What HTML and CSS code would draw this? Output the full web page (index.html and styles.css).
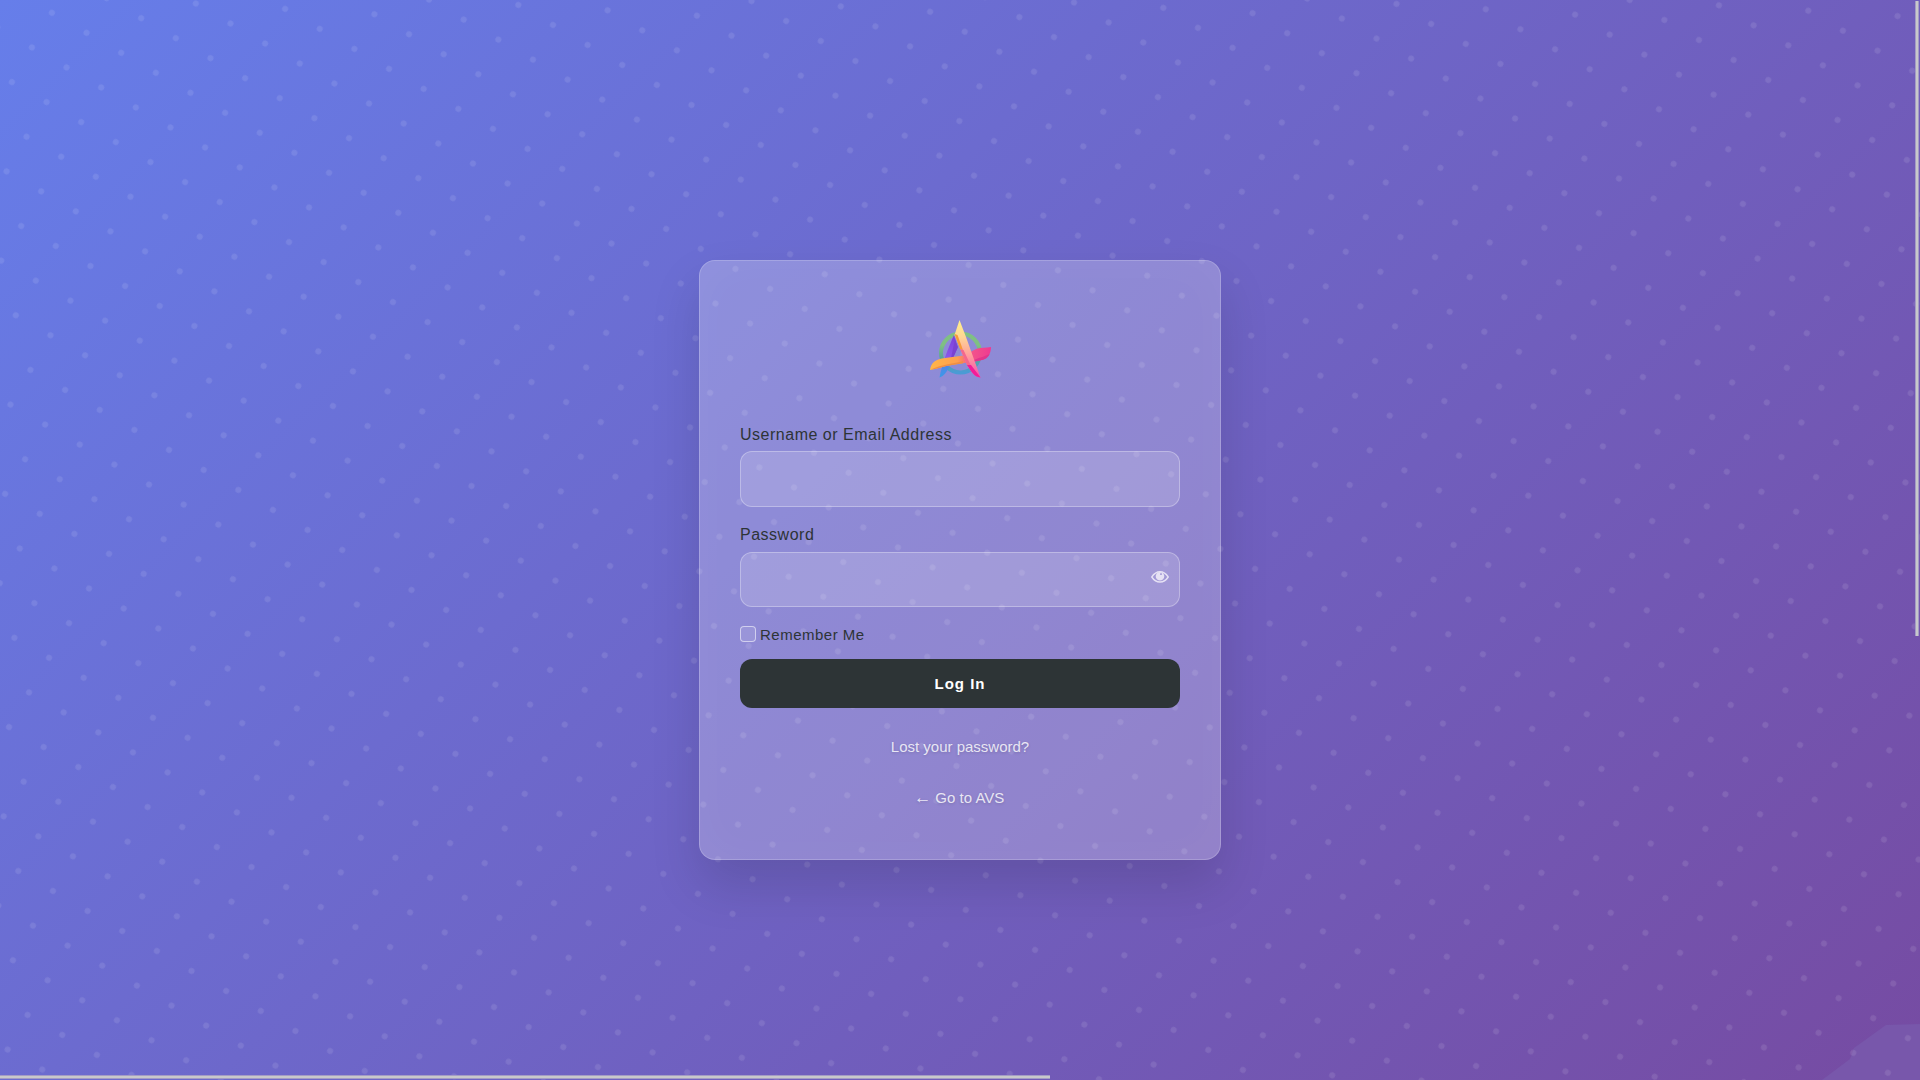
FILE: index.html
```html
<!DOCTYPE html>
<html lang="en">
<head>
<meta charset="utf-8">
<title>Log In</title>
<link rel="stylesheet" href="styles.css">
</head>
<body>
<svg class="dots" aria-hidden="true">
  <defs>
    <pattern id="dot" width="40" height="40" patternUnits="userSpaceOnUse" patternTransform="translate(51.9 12.8) rotate(30) translate(-20 -20)">
      <circle cx="20" cy="20" r="3" fill="#fff" fill-opacity=".1"/>
    </pattern>
  </defs>
  <polygon class="corner" points="1822,1080 1850,1059 1854,1048 1886,1025 1920,1024 1920,1080"/>
  <rect width="1920" height="1080" fill="url(#dot)"/>
</svg>
<main class="card">
  <svg class="logo" viewBox="0 0 72 70" aria-label="AVS">
    <defs>
      <linearGradient id="ring" x1="0" y1="0" x2="0" y2="1"><stop offset=".3" stop-color="#7fc083"/><stop offset=".62" stop-color="#5aa596"/><stop offset="1" stop-color="#4a9bd5"/></linearGradient>
      <linearGradient id="left" x1="0" y1="0" x2="0" y2="1"><stop offset="0" stop-color="#7b3fd8"/><stop offset=".5" stop-color="#8a55ea"/><stop offset=".75" stop-color="#4f88e8"/><stop offset="1" stop-color="#3a9ae8"/></linearGradient>
      <linearGradient id="bar" x1="0" y1="0" x2="1" y2="0"><stop offset="0" stop-color="#ffb648"/><stop offset=".45" stop-color="#ff9f50"/><stop offset=".65" stop-color="#f3568a"/><stop offset="1" stop-color="#ee3a91"/></linearGradient>
      <linearGradient id="right" x1="0" y1="0" x2="0" y2="1"><stop offset="0" stop-color="#fff08c"/><stop offset=".3" stop-color="#ffd594"/><stop offset=".6" stop-color="#ffa09c"/><stop offset="1" stop-color="#f84fae"/></linearGradient>
    </defs>
    <circle cx="36.500" cy="39" r="19.500" fill="none" stroke="url(#ring)" stroke-width="4"/>
    <path fill="url(#left)" d="M30 21 C25 32 18 50 15.500 63.500 C20 62 23 58 25 53 L33.500 34 Z"/>
    <path fill="#7a42d2" d="M31 25 L34 33 L29.500 43 L27 44 Z"/>
    <path fill="url(#bar)" d="M6 56 C7 48 12 45 21 44 L40 41.500 L52 35 C57 33 62 34 67 33 C67 41 63 45 56 46.500 L28 51 C20 52 13 55 6 56 Z"/>
    <path fill="#f08f45" d="M7 55.500 C18 50 30 50 39 47 L39 49.300 L28 51 C20 52 13 55 7 55.500 Z"/>
    <path fill="#e0358c" d="M50 46 C57 43 62 42 65.500 40 C64 44 61 45.500 56 46.500 L49 48 Z"/>
    <path fill="url(#right)" d="M35.500 6 L42 23 L56.500 63.500 C50 63 47 57 43 51 L30.500 21 Z"/>
    <path fill="#f79a3a" d="M30.500 20 L33.500 21 L39 36 L36 35 Z"/>
    <path fill="#f4688c" d="M36 35 L39.500 36 L48 54 L43 51 Z"/>
    <path fill="#f21c99" d="M43 51 L47 51 L56.500 63.500 C50 63 47 57 43 51 Z"/>
  </svg>
  <form class="form">
    <label class="label" for="user">Username or Email Address</label>
    <input class="field" id="user" type="text">
    <label class="label" for="pass">Password</label>
    <div class="password">
      <input class="field" id="pass" type="password">
      <svg class="eye" viewBox="0 0 18 12" aria-hidden="true">
        <path fill="none" stroke="currentColor" stroke-width="1.400" d="M.8 6 C3.500 1.800 6 .8 9 .8 S14.500 1.800 17.200 6 C14.500 10.200 12 11 9 11 S3.500 10.200 .8 6 Z"/>
        <path fill="currentColor" fill-rule="evenodd" d="M9 1 A4.200 4.200 0 1 0 9 9.600 A4.200 4.200 0 1 0 9 1 Z M9.200 2.300 H10.800 V3.900 H9.200 Z"/>
      </svg>
    </div>
    <div class="remember"><input class="check" id="remember" type="checkbox"><label for="remember">Remember Me</label></div>
    <button class="submit" type="button">Log In</button>
  </form>
  <a class="link">Lost your password?</a>
  <a class="link back"><span class="arrow">←</span> Go to AVS</a>
</main>
<div class="bar-v"></div>
<div class="bar-h"></div>
</body>
</html>
```
FILE: styles.css
```css
* { box-sizing: border-box; }
body {
  margin: 0;
  height: 1080px;
  overflow: hidden;
  position: relative;
  display: flex;
  justify-content: center;
  align-items: flex-start;
  padding-top: 260px;
  font-family: "Liberation Sans", Arial, sans-serif;
  background: linear-gradient(135deg, #667eea 0%, #764ba2 100%);
}
.dots { position: absolute; inset: 0; width: 100%; height: 100%; }
.corner { fill: #7857ab; }
.card {
  position: relative;
  display: flex;
  flex-direction: column;
  align-items: center;
  width: 522px;
  height: 600px;
  padding: 53px 40px 0;
  border: 1px solid rgba(255, 255, 255, .2);
  border-radius: 16px;
  background: rgba(255, 255, 255, .23);
  box-shadow: 0 25px 50px rgba(0, 0, 0, .13), inset 0 0 50px rgba(255, 255, 255, .03);
}
.logo { width: 72px; height: 70px; display: block; }
.form { width: 100%; display: flex; flex-direction: column; margin-top: 39px; }
.label { font-size: 16px; line-height: 24px; letter-spacing: .51px; color: #2d3436; margin-bottom: 4px; }
.field {
  display: block;
  width: 100%;
  height: 56px;
  margin: 0 0 16px;
  padding: 0 16px;
  border: 1px solid rgba(255, 255, 255, .3);
  border-radius: 12px;
  background: rgba(255, 255, 255, .16);
  outline: none;
}
.password { position: relative; padding-top: 1px; }
.password .field { height: 55px; margin-bottom: 15px; }
.eye { position: absolute; right: 11px; top: 20px; width: 18px; height: 12px; color: #e6e1f4; }
.remember { display: flex; align-items: center; height: 24px; gap: 4px; font-size: 15px; letter-spacing: .5px; color: #2d3436; }
.check {
  appearance: none;
  width: 16px;
  height: 16px;
  margin: 0;
  border: 1px solid rgba(255, 255, 255, .55);
  border-radius: 4px;
  background: rgba(255, 255, 255, .1);
}
.submit {
  height: 49px;
  margin-top: 13px;
  padding: 0;
  border: 0;
  border-radius: 12px;
  background: #2d3436;
  color: #fff;
  font: bold 15px "Liberation Sans", Arial, sans-serif;
  letter-spacing: 1px;
}
.link { font-size: 15px; line-height: 20px; margin-top: 29px; color: rgba(255, 255, 255, .82); text-shadow: 0 1px 3px rgba(0, 0, 0, .15); }
.link.back { margin-top: 31px; padding-right: 2px; }
.arrow { font-size: 17.5px; line-height: 0; }
.bar-v { position: absolute; top: 1px; right: 1px; width: 4px; height: 635px; background: #c8c8cb; border: solid #a39bc5; border-width: 0 1px; }
.bar-h { position: absolute; left: 0; bottom: 1px; height: 4px; width: 1050px; background: #c8c8cb; border: solid #a39bc5; border-width: 1px 0; }
```
